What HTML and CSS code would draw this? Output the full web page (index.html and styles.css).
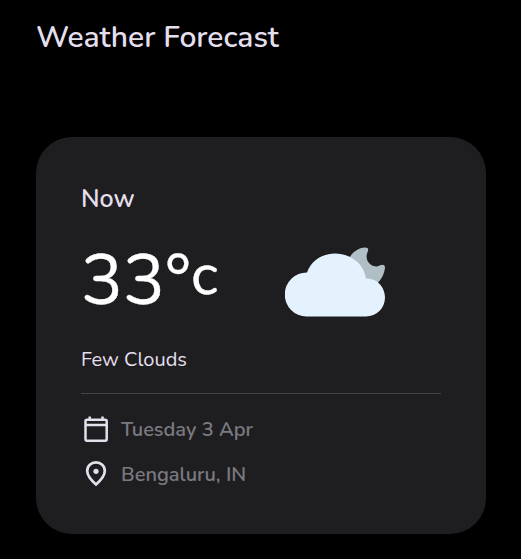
FILE: index.html
```html
<!DOCTYPE html>
<html lang="en">
<head>
<meta charset="utf-8">
<title>Weather Forecast</title>
<link rel="stylesheet" href="styles.css">
</head>
<body>
<main class="page">
  <h1 class="title">Weather Forecast</h1>
  <section class="card">
    <h2 class="now">Now</h2>
    <div class="current">
      <p class="temp"><span class="value">33°</span><span class="unit">c</span></p>
      <svg class="weather" viewBox="0 0 100 70">
        <path fill="#b0bec5" d="M63 13C67 5 74 0.500 80 0.500Q84 0.500 83 4C79 12 84 19.500 92 19.500L96 18Q100 17 100 21C99 27 97 32 92.500 36L78 38Z"/>
        <path fill="#e3f2fd" d="M21.500 69.500A21.800 21.800 0 1 1 22 25.500C26 14 37 6.500 50 6.500C66 6.500 79 17 81 31.500C92 31 100 40 100 50.500C100 61 91.500 69.500 81 69.500Z"/>
      </svg>
    </div>
    <p class="condition">Few Clouds</p>
    <ul class="details">
      <li class="detail">
        <svg class="icon" viewBox="0 0 30 30" fill="none" stroke="currentColor" stroke-width="2.500">
          <rect x="4.500" y="4.700" width="21.200" height="21" rx="1.500"/>
          <path d="M4.500 10H25.700M8.700 1.500V5M21.500 1.500V5"/>
        </svg>
        <span class="date">Tuesday 3 Apr</span>
      </li>
      <li class="detail">
        <svg class="icon" viewBox="0 0 30 30">
          <path fill="none" stroke="currentColor" stroke-width="2.700" d="M15 24.500C8.500 18.700 6.200 14.500 6.200 11C6.200 5.700 10.200 2.400 15 2.400S23.800 5.700 23.800 11C23.800 14.500 21.500 18.700 15 24.500Z"/>
          <circle cx="15" cy="11.300" r="2.600" fill="currentColor"/>
        </svg>
        <span class="place">Bengaluru, IN</span>
      </li>
    </ul>
  </section>
</main>
</body>
</html>
```
FILE: styles.css
```css
* { box-sizing: border-box; margin: 0; padding: 0; }
body {
  background: #000;
  color: #e4dfec;
  font-family: Nunito, Lato, sans-serif;
}
.page { padding: 18px 35px 25px 36px; }
.title {
  height: 40px;
  margin-bottom: 79px;
  font-size: 30px;
  font-weight: 600;
  line-height: 40px;
  white-space: nowrap;
}
.card {
  height: 397px;
  padding: 46px 45px 45px;
  border-radius: 36px;
  background: #1e1e20;
}
.now {
  font-size: 25px;
  font-weight: 600;
  line-height: 33px;
}
.current { display: flex; height: 120px; padding-top: 31px; }
.temp {
  display: flex;
  width: 204px;
  color: #fff;
  line-height: 70px;
}
.value { margin-top: -1px; font-size: 70px; -webkit-text-stroke: 0.3px currentColor; }
.unit { margin-top: -7px; font-size: 58px; -webkit-text-stroke: 0.5px currentColor; }
.weather { width: 100px; height: 70px; }
.condition {
  height: 58px;
  padding-top: 10px;
  border-bottom: 1px solid #444446;
  font-size: 20px;
  line-height: 27px;
}
.details { padding-top: 21px; list-style: none; }
.detail {
  display: flex;
  align-items: center;
  gap: 10px;
  height: 30px;
  margin-bottom: 15px;
  font-size: 20px;
  line-height: 30px;
}
.icon { width: 30px; height: 30px; }
.date, .place { color: #7b7980; font-weight: 600; }
```
